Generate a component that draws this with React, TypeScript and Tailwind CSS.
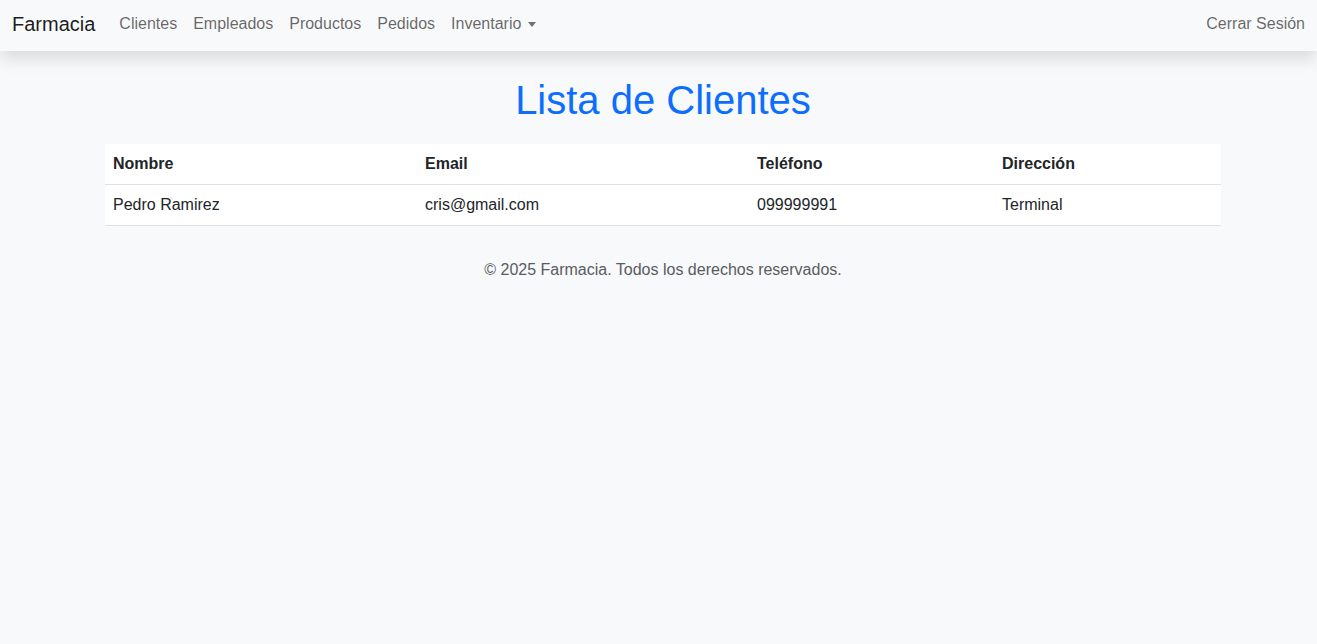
import React from "react";

const clientes = [
  { nombre: "Pedro Ramirez", email: "cris@gmail.com", telefono: "099999991", direccion: "Terminal" },
];

const links = ["Clientes", "Empleados", "Productos", "Pedidos"];

export default function App() {
  return (
    <div className="min-h-[644px] bg-[#f8f9fa] text-[#212529] font-['Liberation_Sans',Arial,sans-serif] text-base leading-6">
      {/* navbar */}
      <nav className="relative z-10 h-[51px] bg-[#f8f9fa] shadow-[0_0.5rem_1rem_rgba(0,0,0,0.12)] flex items-start px-3 pt-[8px]">
        <a className="text-[20px] leading-[30px] py-[1px] mr-4 text-[rgba(0,0,0,0.9)]">Farmacia</a>
        <ul className="flex items-center mt-[4px]">
          {links.map((l) => (
            <li key={l}>
              <a className="px-2 text-[rgba(0,0,0,0.6)]">{l}</a>
            </li>
          ))}
          <li>
            <a className="px-2 text-[rgba(0,0,0,0.6)] inline-flex items-center">
              Inventario
              <span className="ml-[7px] mt-[1px] w-0 h-0 border-t-[5px] border-t-[rgba(0,0,0,0.55)] border-x-[4.5px] border-x-transparent" />
            </a>
          </li>
        </ul>
        <a className="ml-auto mt-[4px] text-[rgba(0,0,0,0.6)]">Cerrar Sesión</a>
      </nav>

      <main className="ml-[105px] w-[1116px]">
        <h1 className="mt-[25px] text-center text-[40px] leading-[48px] text-[#0d6efd]">Lista de Clientes</h1>

        <table className="mt-[20px] w-full bg-white border-collapse table-fixed">
          <colgroup>
            <col className="w-[312px]" />
            <col className="w-[332px]" />
            <col className="w-[245px]" />
            <col />
          </colgroup>
          <thead>
            <tr className="border-b border-[#dee2e6]">
              <th className="text-left font-bold px-2 py-2 h-[40px]">Nombre</th>
              <th className="text-left font-bold px-2 py-2">Email</th>
              <th className="text-left font-bold px-2 py-2">Teléfono</th>
              <th className="text-left font-bold px-2 py-2">Dirección</th>
            </tr>
          </thead>
          <tbody>
            {clientes.map((c) => (
              <tr key={c.email} className="border-b border-[#dee2e6]">
                <td className="px-2 py-2 h-[41px]">{c.nombre}</td>
                <td className="px-2 py-2">{c.email}</td>
                <td className="px-2 py-2">{c.telefono}</td>
                <td className="px-2 py-2">{c.direccion}</td>
              </tr>
            ))}
          </tbody>
        </table>

        <footer className="mt-[32px] text-center text-[#595c5f]">
          © 2025 Farmacia. Todos los derechos reservados.
        </footer>
      </main>
    </div>
  );
}
